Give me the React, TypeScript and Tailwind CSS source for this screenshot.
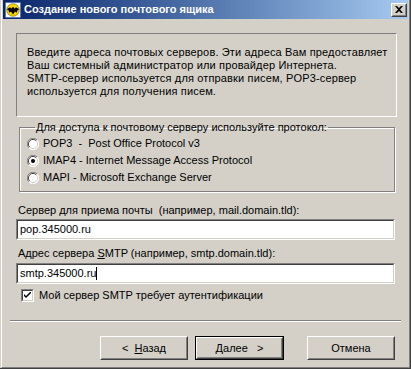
import React from "react";

// Win2000-style "new mailbox" wizard dialog

const font = "font-['Tahoma','Liberation_Sans','DejaVu_Sans',sans-serif]";

function BatIcon() {
  return (
    <svg width="16" height="16" viewBox="0 0 16 16">
      <rect x="0.5" y="0.5" width="15" height="15" fill="#fff" stroke="#3a5fb0" strokeDasharray="1 1" />
      <circle cx="8" cy="8" r="6.3" fill="#f5d800" stroke="#3a3a00" strokeWidth="0.5" />
      <path
        d="M1.8 7.3 L5 5.2 L6.5 6.8 L7.3 4.8 L8 6 L8.7 4.8 L9.5 6.8 L11 5.2 L14.2 7.3 L12.5 8.3 L11.8 10.8 L10 9.5 L8 12.4 L6 9.5 L4.2 10.8 L3.5 8.3 Z"
        fill="#000"
      />
    </svg>
  );
}

function Radio({ checked }: { checked?: boolean }) {
  return (
    <svg width="12" height="12" viewBox="0 0 12 12" className="shrink-0">
      <circle cx="6" cy="6" r="5.5" fill="#fff" />
      <path d="M10.2 2.1 A5.5 5.5 0 0 0 1.8 9.9" fill="none" stroke="#808080" strokeWidth="1" />
      <path d="M9.3 2.8 A4.5 4.5 0 0 0 2.7 9.2" fill="none" stroke="#404040" strokeWidth="1" />
      <path d="M1.8 9.9 A5.5 5.5 0 0 0 10.2 2.1" fill="none" stroke="#ffffff" strokeWidth="1" />
      <path d="M2.7 9.2 A4.5 4.5 0 0 0 9.3 2.8" fill="none" stroke="#d4d0c8" strokeWidth="1" />
      {checked && <circle cx="6" cy="6" r="2" fill="#000" />}
    </svg>
  );
}

function Checkbox() {
  return (
    <div className="w-[13px] h-[13px] shrink-0 border border-t-[#808080] border-l-[#808080] border-r-white border-b-white">
      <div className="w-full h-full bg-white border border-t-[#404040] border-l-[#404040] border-r-[#d4d0c8] border-b-[#d4d0c8] flex items-center justify-center">
        <svg width="7" height="7" viewBox="0 0 7 7">
          <path d="M0 2 L2 4 L7 -1 L7 1 L2 6 L0 4 Z" fill="#000" />
        </svg>
      </div>
    </div>
  );
}

function TextInput({ value, caret }: { value: string; caret?: boolean }) {
  return (
    <div className="w-[379px] h-[21px] border border-t-[#808080] border-l-[#808080] border-r-white border-b-white">
      <div className="h-full bg-white border border-t-[#404040] border-l-[#404040] border-r-[#d4d0c8] border-b-[#d4d0c8] flex items-center pl-[2px] text-[11px] text-black">
        <span>{value}</span>
        {caret && <span className="w-[1px] h-[13px] bg-black" />}
      </div>
    </div>
  );
}

function Button({ children, isDefault }: { children: React.ReactNode; isDefault?: boolean }) {
  const inner = (
    <div className="h-full border border-t-white border-l-white border-r-[#404040] border-b-[#404040]">
      <div className="h-full border border-transparent border-r-[#808080] border-b-[#808080] flex items-center justify-center text-[11px] text-black">
        {children}
      </div>
    </div>
  );
  if (isDefault) {
    return <div className="w-[89px] h-[24px] border border-black">{inner}</div>;
  }
  return <div className="w-[88px] h-[24px]">{inner}</div>;
}

export default function App() {
  return (
    <div className={`w-[411px] h-[369px] bg-[#d4d0c8] border-r border-b border-[#404040] flex flex-col ${font}`}>
      <div className="flex-1 flex flex-col ml-[1px] border-l border-r border-b border-l-white border-r-[#808080] border-b-[#808080]">
        {/* Title bar */}
        <div className="mx-[1px] h-[19px] flex items-center bg-gradient-to-r from-[#0a246a] to-[#a6caf0] pl-[2px] pr-[1px]">
          <BatIcon />
          <span className="ml-[3px] text-white font-bold text-[11px] leading-none">
            Создание нового почтового ящика
          </span>
          <div className="ml-auto w-[16px] h-[14px] bg-[#d4d0c8] border border-t-white border-l-white border-r-[#404040] border-b-[#404040]">
            <div className="h-full border border-transparent border-r-[#808080] border-b-[#808080] flex items-center justify-center">
              <svg width="8" height="7" viewBox="0 0 8 7">
                <path d="M0 0 H2 L4 2 L6 0 H8 L5 3.5 L8 7 H6 L4 5 L2 7 H0 L3 3.5 Z" fill="#000" />
              </svg>
            </div>
          </div>
        </div>

        {/* Body */}
        <div className="flex flex-col pl-[14px]">
          <div className="mt-[14px] w-[381px] h-[84px] border border-t-[#808080] border-l-[#808080] border-r-white border-b-white pt-[12px] pl-[10px] text-[11px] leading-[13px] text-black tracking-[0.15px]">
            Введите адреса почтовых серверов. Эти адреса Вам предоставляет
            <br />
            Ваш системный администратор или провайдер Интернета.
            <br />
            SMTP-сервер используется для отправки писем, POP3-сервер
            <br />
            используется для получения писем.
          </div>

          <fieldset className="mt-[4px] ml-[3px] w-[376px] border border-[#808080] shadow-[inset_1px_1px_0_#fff,1px_1px_0_#fff] pl-[7px] pt-[1px] pb-[5px] text-[11px] text-black">
            <legend className="ml-[8px] px-[1px] leading-[13px]">
              <span className="underline">Д</span>ля доступа к почтовому серверу используйте протокол:
            </legend>
            <div className="h-[17px] flex items-center gap-[4px]">
              <Radio />
              <span>POP3&nbsp; - &nbsp;Post Office Protocol v3</span>
            </div>
            <div className="h-[17px] flex items-center gap-[4px]">
              <Radio checked />
              <span>IMAP4 - Internet Message Access Protocol</span>
            </div>
            <div className="h-[17px] flex items-center gap-[4px]">
              <Radio />
              <span>MAPI - Microsoft Exchange Server</span>
            </div>
          </fieldset>

          <div className="mt-[12px] ml-[2px] text-[11px] leading-[13px] text-black">
            Сервер для приема почты&nbsp; (например, mail.domain.tld):
          </div>
          <div className="mt-[2px]">
            <TextInput value="pop.345000.ru" />
          </div>

          <div className="mt-[7px] ml-[2px] text-[11px] leading-[13px] text-black">
            Адрес сервера <span className="underline">S</span>MTP (например, smtp.domain.tld):
          </div>
          <div className="mt-[3px]">
            <TextInput value="smtp.345000.ru" caret />
          </div>

          <div className="mt-[5px] ml-[5px] h-[13px] flex items-center gap-[5px] text-[11px] text-black">
            <Checkbox />
            <span>Мой сервер SMTP требует аутентификации</span>
          </div>
        </div>

        <div className="mt-[18px] ml-[8px] w-[391px] h-[2px] border-t border-t-[#808080] border-b border-b-white" />

        <div className="mt-[14px] ml-[98px] flex items-center">
          <Button>
            <span>&lt;&nbsp; <span className="underline">Н</span>азад</span>
          </Button>
          <div className="ml-[7px]">
            <Button isDefault>
              <span><span className="underline">Д</span>алее&nbsp;&nbsp; &gt;</span>
            </Button>
          </div>
          <div className="ml-[23px]">
            <Button>Отмена</Button>
          </div>
        </div>
      </div>
    </div>
  );
}
